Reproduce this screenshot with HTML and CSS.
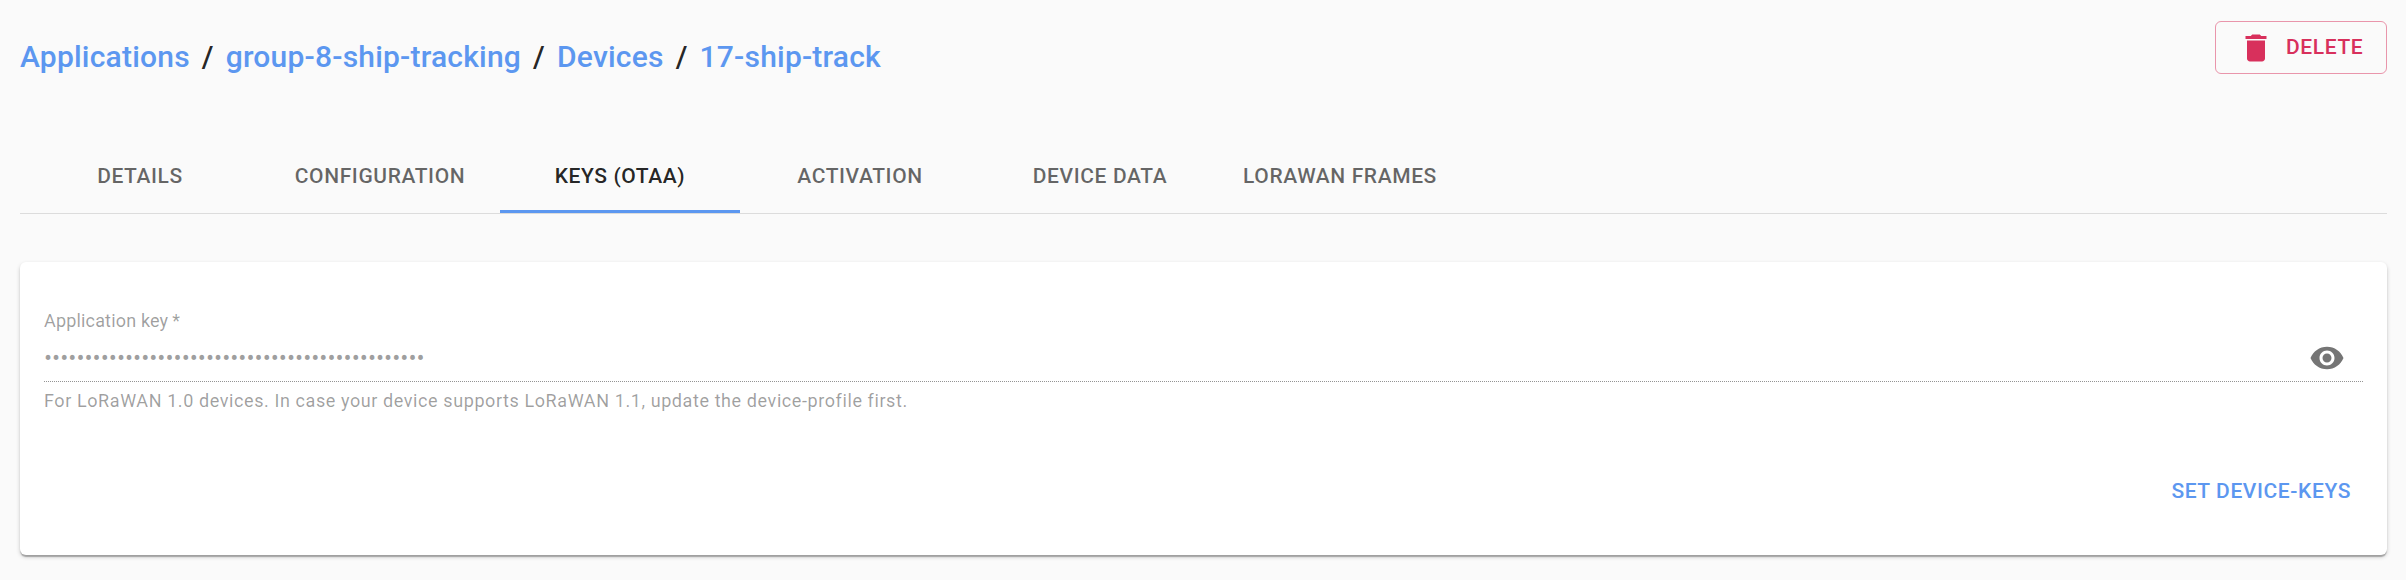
FILE: index.html
```html
<!DOCTYPE html>
<html lang="en">
<head>
<meta charset="utf-8">
<title>17-ship-track</title>
<link rel="stylesheet" href="styles.css">
</head>
<body>
<header class="title-bar">
  <h1 class="breadcrumb"><a class="crumb">Applications</a><span class="slash">/</span><a class="crumb">group-8-ship-tracking</a><span class="slash">/</span><a class="crumb">Devices</a><span class="slash">/</span><a class="crumb">17-ship-track</a></h1>
  <button class="button delete" type="button">
    <svg class="icon" viewBox="0 0 24 24"><path d="M6 19c0 1.100.9 2 2 2h8c1.100 0 2-.9 2-2V7H6v12zM19 4h-3.500l-1-1h-5l-1 1H5v2h14V4z"/></svg>
    <span class="delete-text">Delete</span>
  </button>
</header>
<nav class="tabs">
  <a class="tab">Details</a>
  <a class="tab">Configuration</a>
  <a class="tab active">Keys (OTAA)</a>
  <a class="tab">Activation</a>
  <a class="tab">Device data</a>
  <a class="tab">LoRaWAN frames</a>
</nav>
<main class="card">
  <label class="label" for="key">Application key&thinsp;*</label>
  <div class="field">
    <input class="input" id="key" type="password" disabled value="00:00:00:00:00:00:00:00:00:00:00:00:00:00:00:00">
    <svg class="icon eye" viewBox="0 0 24 24"><path d="M12 4.500C7 4.500 2.730 7.610 1 12c1.730 4.390 6 7.500 11 7.500s9.270-3.110 11-7.500c-1.730-4.390-6-7.500-11-7.500zM12 17c-2.760 0-5-2.240-5-5s2.240-5 5-5 5 2.240 5 5-2.240 5-5 5zm0-8c-1.660 0-3 1.340-3 3s1.340 3 3 3 3-1.340 3-3-1.340-3-3-3z"/></svg>
  </div>
  <p class="helper">For LoRaWAN 1.0 devices. In case your device supports LoRaWAN 1.1, update the device-profile first.</p>
  <div class="actions"><button class="button submit" type="button">Set device-keys</button></div>
</main>
</body>
</html>
```
FILE: styles.css
```css
* { box-sizing: border-box; }
body {
  margin: 0;
  padding: 21px 19px 0 20px;
  height: 580px;
  overflow: hidden;
  background: #fafafa;
  color: rgba(0, 0, 0, 0.87);
  font-family: Roboto, "Liberation Sans", sans-serif;
}
.title-bar {
  display: flex;
  justify-content: space-between;
  align-items: flex-start;
  height: 120px;
}
.breadcrumb {
  margin: 12px 0 0;
  font-size: 30px;
  font-weight: 500;
  line-height: 48px;
  letter-spacing: 0.007em;
  white-space: nowrap;
}
.crumb { color: #5c97f0; }
.slash { margin: 0 12px; }
.button {
  display: flex;
  align-items: center;
  border: 0;
  background: none;
  font: 500 21px/36px Roboto, "Liberation Sans", sans-serif;
  letter-spacing: 0.02857em;
  text-transform: uppercase;
}
.delete {
  width: 172px;
  height: 53px;
  padding: 0 0 0 22px;
  border: 1px solid rgba(216, 48, 92, 0.5);
  border-radius: 6px;
  color: #d8305c;
}
.icon { width: 36px; height: 36px; fill: currentColor; }
.delete .icon { margin-right: 12px; }
.delete-text { padding-bottom: 2px; }
.tabs {
  display: flex;
  height: 73px;
  border-bottom: 1px solid #dcdcdc;
}
.tab {
  width: 240px;
  height: 72px;
  color: rgba(0, 0, 0, 0.6);
  font-size: 21px;
  font-weight: 500;
  line-height: 70px;
  letter-spacing: 0.02857em;
  text-align: center;
  text-transform: uppercase;
  white-space: nowrap;
}
.active {
  border-bottom: 3px solid #5c97f0;
  color: rgba(0, 0, 0, 0.87);
}
.card {
  height: 293px;
  margin-top: 48px;
  padding: 47px 24px 0;
  border-radius: 6px;
  background: #fff;
  box-shadow: 0 2px 4px rgba(0, 0, 0, 0.2), 0 2px 1px rgba(0, 0, 0, 0.14), 0 3px 1px -1px rgba(0, 0, 0, 0.12);
}
.label {
  display: block;
  height: 25px;
  color: rgba(0, 0, 0, 0.38);
  font-size: 18px;
  line-height: 24px;
  letter-spacing: 0.00938em;
}
.field {
  display: flex;
  align-items: center;
  height: 48px;
  padding-bottom: 1px;
  background: repeating-linear-gradient(90deg, #949494 0 1px, transparent 1px 2px) bottom / 100% 1px no-repeat;
}
.input {
  flex: 1;
  padding: 0;
  border: 0;
  background: none;
  color: rgba(0, 0, 0, 0.38);
  font: 24px/28px Roboto, "Liberation Sans", sans-serif;
}
.eye { margin-right: 18px; color: rgba(0, 0, 0, 0.54); }
.helper {
  margin: 8px 0 0;
  color: rgba(0, 0, 0, 0.38);
  font-size: 18px;
  line-height: 21px;
  letter-spacing: 0.0328em;
}
.actions {
  display: flex;
  justify-content: flex-end;
  margin-top: 53px;
}
.submit { padding: 9px 12px; color: #5c97f0; }
```
